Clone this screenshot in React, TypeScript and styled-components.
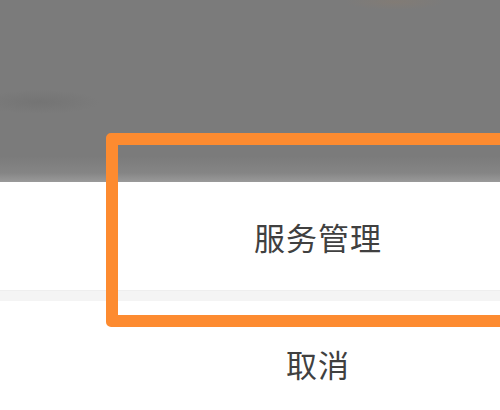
import React from "react";
import styled, { createGlobalStyle } from "styled-components";

const Global = createGlobalStyle`
  html, body { margin: 0; padding: 0; background: #ffffff; }
  body { font-family: "Noto Sans CJK SC", "Noto Sans", sans-serif; }
`;

const Screen = styled.div`
  position: relative;
  width: 500px;
  height: 410px;
  overflow: hidden;
  display: flex;
  flex-direction: column;
  background: #ffffff;
`;

const Backdrop = styled.div`
  height: 182px;
  flex-shrink: 0;
  background:
    radial-gradient(ellipse 60px 12px at 40px 102px, rgba(100, 100, 100, 0.3), rgba(100, 100, 100, 0) 100%),
    radial-gradient(ellipse 50px 8px at 395px 2px, rgba(150, 125, 100, 0.25), rgba(150, 125, 100, 0) 100%),
    linear-gradient(to bottom, #7b7b7b 0%, #7b7b7b 86%, #858585 95%, #9a9a9a 100%);
`;

const Sheet = styled.div`
  display: flex;
  flex-direction: column;
  background: #ffffff;
`;

const Row = styled.div<{ $h: number }>`
  height: ${(p) => p.$h}px;
  display: flex;
  align-items: center;
  justify-content: center;
  padding-left: 136px;
  font-size: 31px;
  letter-spacing: 1px;
  color: #404040;
  background: #ffffff;
`;

const Divider = styled.div`
  height: 10px;
  background: #f4f4f4;
  border-top: 1px solid #eeeeee;
`;

const Highlight = styled.div`
  position: absolute;
  left: 106px;
  top: 133px;
  width: 420px;
  height: 194px;
  box-sizing: border-box;
  border: 12px solid #fd8b30;
  border-radius: 5px;
  pointer-events: none;
`;

export default function App() {
  return (
    <>
      <Global />
      <Screen>
        <Backdrop />
        <Sheet>
          <Row $h={108}>服务管理</Row>
          <Divider />
          <Row $h={124}>取消</Row>
        </Sheet>
        <Highlight />
      </Screen>
    </>
  );
}
